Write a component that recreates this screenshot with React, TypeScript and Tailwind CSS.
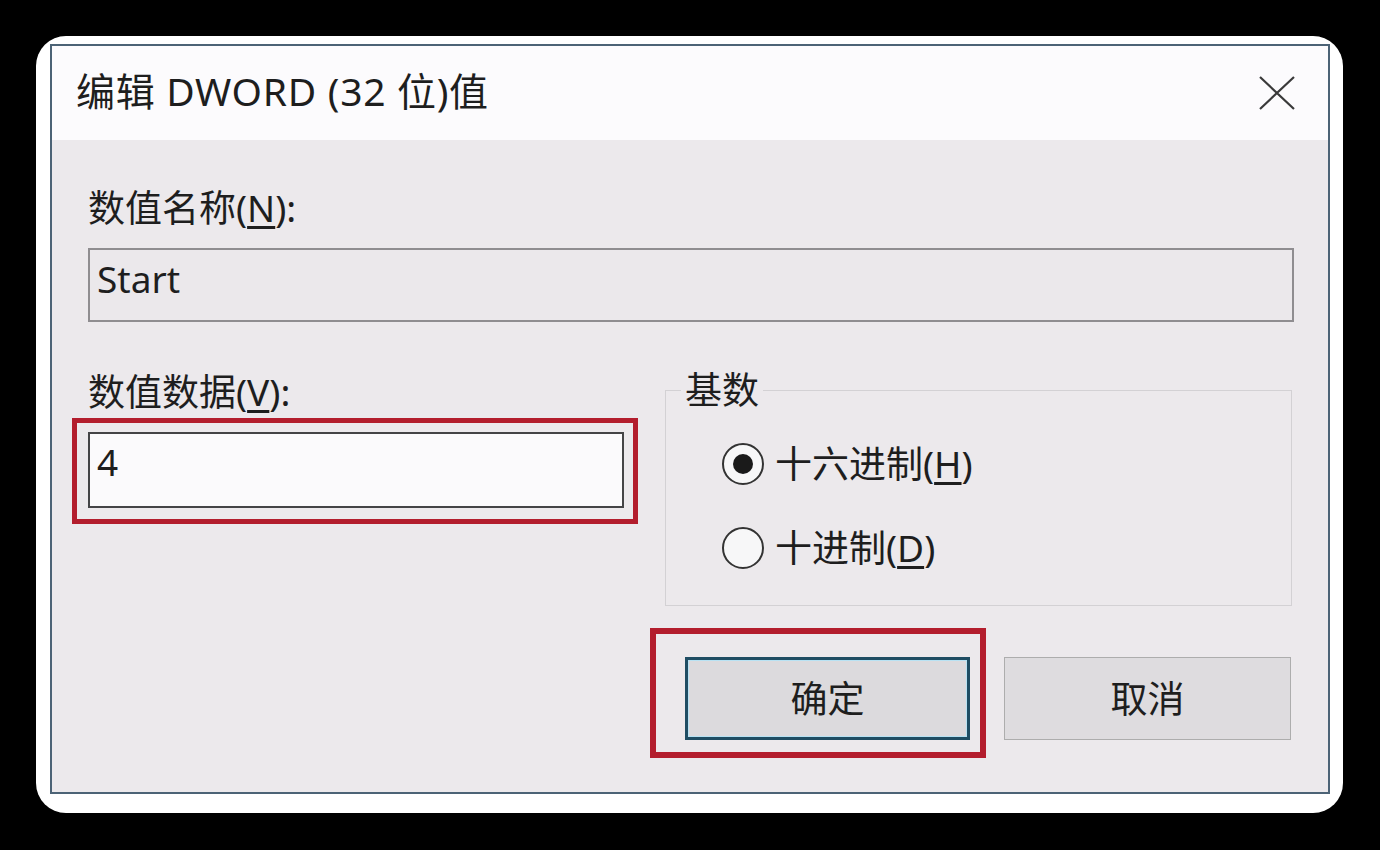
export default function App() {
  return (
    <div className="h-[850px] w-[1380px] bg-black pl-[36px] pt-[36px] font-['Noto_Sans','Noto_Sans_CJK_SC',sans-serif] text-[#1e1e1e]">
      <div className="h-[777px] w-[1307px] rounded-[30px] bg-white pl-[14px] pt-[8px]">
        <div className="flex h-[750px] w-[1280px] flex-col border-2 border-[#4c6376] bg-[#ece9ec]">
          {/* title bar */}
          <div className="flex h-[94px] shrink-0 items-center justify-between bg-[#fcfbfd] pl-[24px] pr-[33px]">
            <span className="pb-[6px] text-[39px] leading-none tracking-[0.7px]">编辑 DWORD (32 位)值</span>
            <svg width="36" height="34" viewBox="0 0 36 34" fill="none">
              <path d="M1 1L35 33M35 1L1 33" stroke="#3a3a3a" strokeWidth="2.2" />
            </svg>
          </div>

          <div className="flex flex-1 flex-col pl-[20px] pr-[34px]">
            <div className="pl-[16px] pt-[45px]">
              <div className="h-[45px] text-[37px] leading-[45px]">
                数值名称(<u className="underline-offset-4">N</u>):
              </div>
              <div className="mt-[18px] flex h-[74px] items-center border-2 border-[#8f8d90] bg-[#ebe8eb] pb-[12px] pl-[7px] text-[37px]">
                Start
              </div>
            </div>

            <div className="mt-[48px] grid grid-cols-[566px_627px] gap-x-[27px] pr-[2px]">
              <div>
                <div className="h-[44px] pl-[16px] text-[37px] leading-[44px]">
                  数值数据(<u className="underline-offset-4">V</u>):
                </div>
                <div className="mt-[4px] border-[5px] border-[#b31d2d] pb-[11px] pl-[11px] pr-[9px] pt-[9px]">
                  <div className="flex h-[76px] items-center border-2 border-[#444446] bg-[#fbfafc] pb-[16px] pl-[7px] text-[37px]">
                    4
                  </div>
                </div>
              </div>

              <fieldset className="mt-[2px] h-[234px] border border-[#d3d1d4]">
                <legend className="ml-[15px] px-[4px] text-[37px] leading-[36px]">基数</legend>
                <div className="flex flex-col gap-[40px] pl-[56px] pt-[34px]">
                  <label className="flex h-[44px] items-center gap-[11px] text-[37px]">
                    <span className="flex h-[42px] w-[42px] items-center justify-center rounded-full border-2 border-[#333] bg-[#f7f7f8]">
                      <span className="h-[20px] w-[20px] rounded-full bg-[#1a1a1a]" />
                    </span>
                    <span>
                      十六进制(<u className="underline-offset-4">H</u>)
                    </span>
                  </label>
                  <label className="flex h-[44px] items-center gap-[11px] text-[37px]">
                    <span className="h-[42px] w-[42px] rounded-full border-2 border-[#333] bg-[#f7f7f8]" />
                    <span>
                      十进制(<u className="underline-offset-4">D</u>)
                    </span>
                  </label>
                </div>
              </fieldset>
            </div>

            <div className="mt-[22px] flex items-start justify-end gap-[18px] pr-[3px]">
              <div className="border-[6px] border-[#b31d2d] pb-[12px] pl-[29px] pr-[10px] pt-[23px]">
                <button className="flex h-[83px] w-[285px] items-center justify-center border-[3px] border-[#1f4d63] bg-[#dcdadd] text-[37px] shadow-[inset_0_0_0_1px_#b8e2f3]">
                  确定
                </button>
              </div>
              <button className="mt-[29px] flex h-[83px] w-[287px] items-center justify-center border border-[#adadad] bg-[#dedcdf] text-[37px]">
                取消
              </button>
            </div>
          </div>
        </div>
      </div>
    </div>
  );
}
